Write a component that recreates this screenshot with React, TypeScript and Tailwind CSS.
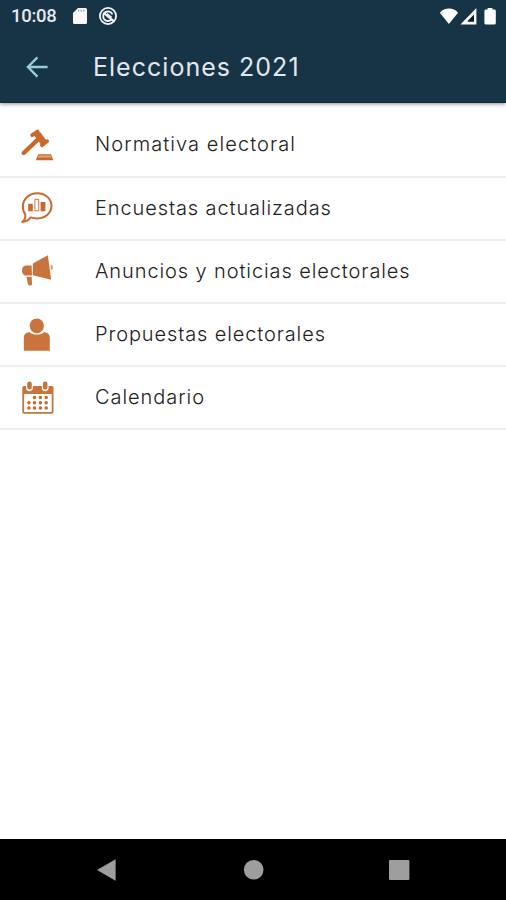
import type { ReactNode } from "react";

const GavelIcon = () => (
  <svg viewBox="0 0 36 36" className="w-9 h-9 shrink-0" fill="#c8692b">
    <path d="M15 8.6 21 4.8 27.4 13.4 22 17.4Z" />
    <path d="M13.2 8.2 18.6 4.6M22.9 18.2 28.1 14.2" stroke="#c8692b" strokeWidth="3.8" strokeLinecap="round" />
    <path d="M4.7 26 18 13.4" stroke="#c8692b" strokeWidth="4.4" strokeLinecap="round" />
    <path d="M19.2 27.3H32L34.4 33.3H16.9Z" />
    <path d="M19.6 28.4H31.8L32.6 30.6H18.6Z" fill="#dba584" />
  </svg>
);

const SurveyIcon = () => (
  <svg viewBox="0 0 36 36" className="w-9 h-9 shrink-0" fill="none" stroke="#c8692b">
    <path
      d="M6.3 24.6C4.6 22.3 3.8 19 3.9 15.9C4.1 8.8 10.3 3.2 18.2 3.2C26.3 3.2 32.5 8.8 32.5 15.8C32.5 23 26.3 28.4 18.2 28.4C15.8 28.4 13.8 28.1 11.8 27.4C9.8 29.8 6.4 31.9 3.3 32C5.6 30 6.7 27.2 6.3 24.6Z"
      strokeWidth="2"
      strokeLinejoin="round"
    />
    <path d="M9.2 13.8H13.8V21.2H9.2ZM21.6 12H26.4V21.2H21.6Z" fill="#c8692b" stroke="none" />
    <path d="M15.9 9.4H19.7V20.8H15.9Z" strokeWidth="0.9" />
  </svg>
);

const MegaphoneIcon = () => (
  <svg viewBox="0 0 36 36" className="w-9 h-9 shrink-0" fill="#c8743c">
    <path d="M13.8 10.6 28.8 2.2 32.2 26.8 13.8 22.2Z" />
    <path d="M12.6 12.4H7C4.4 12.4 3 14.7 3 17.4C3 20.4 4.6 22.6 7.2 22.6H13Z" />
    <path d="M7.4 23.8H12.6L13.1 31C13.2 32.8 9.8 33 9 31.2Z" />
    <path d="M31.4 11.8C34.6 11.8 34.8 16.8 32 16.8Z" fill="#d9986e" />
  </svg>
);

const PersonIcon = () => (
  <svg viewBox="0 0 36 36" className="w-9 h-9 shrink-0" fill="#c8743c">
    <ellipse cx="17.8" cy="8.8" rx="7.1" ry="7.4" />
    <path d="M10.4 14.9C12 16.7 14.6 17.6 17.8 17.6C21 17.6 23.6 16.7 25.2 14.9C28.8 15.4 30.8 17.4 30.8 20.4V33.7H4.8V20.4C4.8 17.4 6.8 15.4 10.4 14.9Z" />
  </svg>
);

const CalendarIcon = () => (
  <svg viewBox="0 0 36 36" className="w-9 h-9 shrink-0" fill="#c8743c">
    <path d="M5 6H32.8Q34.5 6 34.5 7.6V32Q34.5 33.8 32.8 33.8H5Q3.3 33.8 3.3 32V7.6Q3.3 6 5 6ZM5.1 14V32.1H32.7V14Z" fillRule="evenodd" />
    <path d="M10.5 4.2V7.8M26.2 4.2V7.8" stroke="#fff" strokeWidth="6.8" strokeLinecap="round" />
    <path d="M10.5 3.9V7.2M26.2 3.9V7.2" stroke="#c8743c" strokeWidth="4.6" strokeLinecap="round" />
    <path
      d="M15.5 17.6H15.51M21.4 17.6H21.41M27.2 17.6H27.21M9.9 22.8H9.91M15.5 22.8H15.51M21.4 22.8H21.41M27.2 22.8H27.21M9.9 28H9.91M15.5 28H15.51M21.4 28H21.41M27.2 28H27.21"
      stroke="#c8692b"
      strokeWidth="3.5"
      strokeLinecap="round"
    />
  </svg>
);

type MenuItem = { title: string; icon: ReactNode; tracking: string };

const menuItems: MenuItem[] = [
  { title: "Normativa electoral", icon: <GavelIcon />, tracking: "tracking-[1.08px]" },
  { title: "Encuestas actualizadas", icon: <SurveyIcon />, tracking: "tracking-[0.9px]" },
  { title: "Anuncios y noticias electorales", icon: <MegaphoneIcon />, tracking: "tracking-[0.9px]" },
  { title: "Propuestas electorales", icon: <PersonIcon />, tracking: "tracking-[0.88px]" },
  { title: "Calendario", icon: <CalendarIcon />, tracking: "tracking-[0.95px]" },
];

function StatusBar() {
  return (
    <div className="flex h-8 items-center pl-[11px] pr-[8px] text-white">
      <span className="font-['Roboto',sans-serif] text-[18.5px] leading-[34px] font-medium text-[#e6eaed] tracking-[-0.3px] w-[61px]">10:08</span>
      <svg viewBox="0 0 16 18" className="w-4 h-[18px]" fill="#f8f8f8">
        <path d="M6 1H13.5Q15 1 15 2.5V15.5Q15 17 13.5 17H2.5Q1 17 1 15.5V6Z" />
        <path d="M6.6 2.8V4.6M9.2 2.8V4.6M11.8 2.8V4.6" stroke="#8b969e" strokeWidth="1.2" />
      </svg>
      <svg viewBox="0 0 20 20" className="ml-[10px] w-5 h-5" fill="none" stroke="#f1f3f4">
        <circle cx="10" cy="10" r="8.1" strokeWidth="1.8" />
        <path d="M13.6 13.4A4.8 4.8 0 1 1 14.4 8.4" strokeWidth="1.9" />
        <path d="M5.4 6.6 16 15.4" strokeWidth="2.2" />
        <path d="M9 7.6 13.6 11.4" strokeWidth="1.4" />
      </svg>
      <svg viewBox="0 0 60 20" className="ml-auto w-[60px] h-5" fill="#fff">
        <path d="M1.8 6.8C6.4 1.2 15.6 1.2 20 6.8L10.9 18Z" />
        <path d="M38.4 2V18.4H22.4Z" />
        <path d="M36 8.6V15.8H29.8V14.8Z" fill="#0a1c29" />
        <path d="M49.6 2H54.4V3.6H56.4Q57.8 3.6 57.8 5V17Q57.8 18.6 56.2 18.6H48Q46.4 18.6 46.4 17V5Q46.4 3.6 47.8 3.6H49.6Z" />
      </svg>
    </div>
  );
}

function AppBar() {
  return (
    <div className="flex h-[70px] items-center pl-[26px]">
      <svg viewBox="0 0 22 22" className="w-[22px] h-[22px]" fill="none" stroke="#9bcbd5" strokeWidth="2.4">
        <path d="M21.6 11H2.4M11.4 1.4 1.9 11 11.4 20.6" />
      </svg>
      <h1 className="ml-[45px] text-[25px] leading-8 font-normal text-[#e3e6ef] tracking-[1.02px] whitespace-nowrap">Elecciones 2021</h1>
    </div>
  );
}

export default function App() {
  return (
    <div className="flex h-[900px] w-[506px] flex-col overflow-hidden bg-white font-['Inter',sans-serif]">
      <header className="h-[103px] shrink-0 border-b border-[#0f2a39] bg-[#163445] shadow-[0_1px_4px_rgba(0,0,0,0.45)]">
        <StatusBar />
        <AppBar />
      </header>

      <main className="flex-1 pt-[11.4px]">
        <ul>
          {menuItems.map((item) => (
            <li key={item.title} className="flex h-[63.2px] items-center border-b-2 border-[#efefef] pl-[19px]">
              {item.icon}
              <span className={`ml-[40px] -mt-px text-[20px] leading-6 font-light text-[#222] whitespace-nowrap ${item.tracking}`}>
                {item.title}
              </span>
            </li>
          ))}
        </ul>
      </main>

      <nav className="h-[61px] shrink-0 bg-black">
        <svg viewBox="0 0 506 61" className="h-[61px] w-[506px]" fill="#9e9e9e">
          <path d="M97 31 115.6 20.2V41.8Z" />
          <circle cx="253.7" cy="30.8" r="9.8" />
          <rect x="389" y="21" width="20.4" height="20" rx="1.2" />
        </svg>
      </nav>
    </div>
  );
}
